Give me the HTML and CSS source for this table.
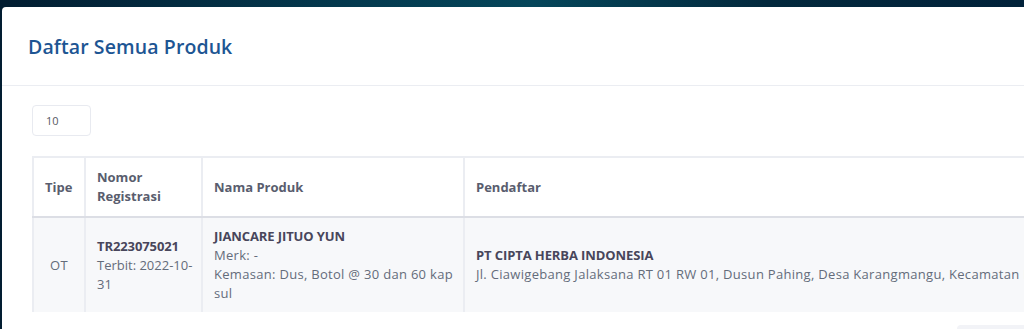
FILE: index.html
```html
<!DOCTYPE html>
<html lang="id">
<head>
<meta charset="utf-8">
<title>Daftar Semua Produk</title>
<link rel="stylesheet" href="styles.css">
</head>
<body>
<div class="page">
  <div class="card">
    <div class="card-head">
      <h3 class="card-title">Daftar Semua Produk</h3>
    </div>
    <div class="card-body">
      <div class="length-box">10</div>
      <table class="table">
        <colgroup>
          <col class="c1"><col class="c2"><col class="c3"><col class="c4">
        </colgroup>
        <thead>
          <tr>
            <th>Tipe</th>
            <th>Nomor<br>Registrasi</th>
            <th>Nama Produk</th>
            <th>Pendaftar</th>
          </tr>
        </thead>
        <tbody>
          <tr>
            <td class="center">OT</td>
            <td class="tight"><b>TR223075021</b><br>Terbit: 2022-10-31</td>
            <td><b>JIANCARE JITUO YUN</b><br>Merk: -<br>Kemasan: Dus, Botol @ 30 dan 60 kap sul</td>
            <td class="nowrap"><b>PT CIPTA HERBA INDONESIA</b><br>Jl. Ciawigebang Jalaksana RT 01 RW 01, Dusun Pahing, Desa Karangmangu, Kecamatan Kuningan, Kabupaten Kuningan</td>
          </tr>
        </tbody>
      </table>
      <div class="pager"><span class="pager-btn"></span></div>
    </div>
  </div>
</div>
</body>
</html>
```
FILE: styles.css
```css
html, body {
  margin: 0;
  padding: 0;
  width: 1024px;
  height: 329px;
  overflow: hidden;
}
body {
  background: linear-gradient(90deg, #021d31 0%, #043a4f 35%, #05465a 52%, #03293d 75%, #01223a 100%);
  font-family: "Open Sans", "Noto Sans", sans-serif;
  font-size: 13px;
  color: #646c7a;
}
.page {
  padding: 7px 0 0 2px;
}
.card {
  width: 1180px;
  background: #fff;
  border-top-left-radius: 4px;
  min-height: 340px;
}
.card-head {
  height: 78px;
  display: flex;
  align-items: center;
  padding-left: 26px;
  border-bottom: 1px solid #ebedf2;
}
.card-title {
  margin: 0;
  font-size: 19.5px;
  font-weight: 600;
  color: #1d5593;
  letter-spacing: 0.1px;
}
.card-body {
  padding: 19px 30px 0 30px;
}
.length-box {
  width: 44px;
  height: 29px;
  border: 1px solid #e8eaf0;
  border-radius: 4px;
  font-size: 11px;
  line-height: 29px;
  padding-left: 13px;
  color: #575962;
  margin-bottom: 20px;
}
.table {
  border-collapse: collapse;
  table-layout: fixed;
  width: 1130px;
  border: 2px solid #ebedf2;
  border-bottom: none;
}
.c1 { width: 52px; }
.c2 { width: 117px; }
.c3 { width: 262px; }
.c4 { width: 699px; }
.table th, .table td {
  border-left: 2px solid #ebedf2;
  text-align: left;
  vertical-align: middle;
  line-height: 19px;
}
.table th {
  padding: 9px 10px 9px 11px;
  font-weight: 700;
  color: #595d6e;
  height: 40px;
  border-bottom: 2px solid #dcdee5;
}
.table td {
  background: #f7f8fa;
  padding: 9px 10px 9px 11px;
  color: #646c7a;
  letter-spacing: 0.3px;
}
.table td b {
  color: #48465b;
  letter-spacing: -0.1px;
}
.table td.center {
  text-align: center;
  padding-left: 6px;
  padding-right: 6px;
}
.table td.tight {
  padding-right: 3px;
  letter-spacing: 0;
}
.nowrap {
  white-space: nowrap;
}
.pager {
  display: flex;
  justify-content: flex-end;
  padding-top: 13px;
  width: 995px;
}
.pager-btn {
  display: block;
  width: 70px;
  height: 30px;
  background: #f2f3f7;
  border-radius: 4px;
}
```
